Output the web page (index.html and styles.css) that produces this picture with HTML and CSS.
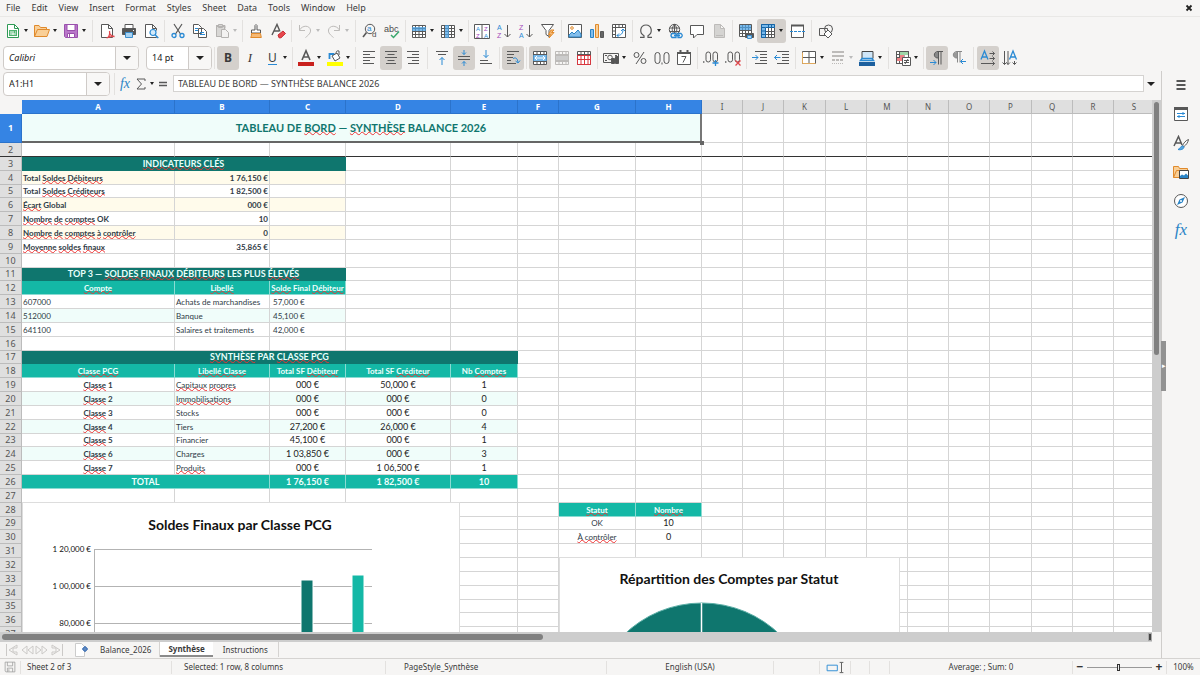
FILE: index.html
```html
<!DOCTYPE html>
<html lang="en">
<head>
<meta charset="utf-8">
<title>Synthèse</title>
<link rel="stylesheet" href="styles.css">
</head>
<body>
<div class="app">
  <header class="menubar">
    <nav class="menus" aria-label="Menu">
      <button>File</button><button>Edit</button><button>View</button><button>Insert</button><button>Format</button><button>Styles</button><button>Sheet</button><button>Data</button><button>Tools</button><button>Window</button><button>Help</button>
    </nav>
    <button class="close" aria-label="Close document"><svg viewBox="0 0 8 8"><path d="M1.500 1.500l5 5M6.500 1.500l-5 5" stroke-width="1.800"/></svg></button>
  </header>

  <div class="toolbar" role="toolbar" aria-label="Standard">
    <button class="tool drop" aria-label="New"><svg viewBox="0 0 16 16"><path class="green fw" d="M2.500 1.500h7l4 4v9h-11z"/><path class="green" d="M9.500 1.500v4h4"/><path class="fgreen" d="M4 7h8v6H4z"/><path stroke="#fff" d="M5 9h4M5 11h4M10 9h1M7 11h4"/></svg><i class="caret"></i></button>
    <button class="tool drop" aria-label="Open"><svg viewBox="0 0 16 16"><path fill="#f9cf97" stroke="#e08a2c" d="M.5 13.500v-11h4.500l1.500 2h6v2.500M.5 13.500l3-7h12l-2.500 7z"/></svg><i class="caret"></i></button>
    <button class="tool drop" aria-label="Save"><svg viewBox="0 0 16 16"><path fill="#b977c9" stroke="#9a50ad" d="M1.500 1.500h13v13h-12l-1-1z"/><path fill="#fff" stroke="#9a50ad" d="M4 1.500h8v6H4zM4.500 10.500h7v4h-7z"/><path stroke="#9a50ad" d="M6.500 11v3"/></svg><i class="caret"></i></button>
    <span class="sep wide"></span>
    <button class="tool" aria-label="Export as PDF"><svg viewBox="0 0 16 16"><path class="fw" d="M2.500 1.500h7l4 4v9h-11z"/><path d="M9.500 1.500v4h4"/><path stroke="#e0474c" stroke-width="1.300" d="M8.500 15c2-2 2.500-4.500 2-7M10.700 10.500c1 2 2.500 3 4.800 3-3-.5-5 0-8 1.500"/></svg></button>
    <button class="tool" aria-label="Print"><svg viewBox="0 0 16 16"><path class="fw" d="M4 5V1.500h8V5"/><path fill="#555" d="M1.500 5.500h13v6h-13z"/><path fill="#a9d3f2" stroke="#3d8fce" d="M4.500 9.500h7v5h-7z"/><path stroke="#fff" d="M12 7.500h1"/></svg></button>
    <button class="tool" aria-label="Print preview"><svg viewBox="0 0 16 16"><path class="fw" d="M13.500 13v1.500h-11v-13h7l4 4v2M9.500 1.500v4h4"/><circle cx="10" cy="9.500" r="3" fill="#d4eafa" class="blue" stroke-width="1.200"/><path class="blue" stroke-width="1.500" d="M12.300 12l3 3"/></svg></button>
    <span class="sep"></span>
    <button class="tool" aria-label="Cut"><svg viewBox="0 0 16 16"><path stroke-width="1.200" d="M4 1l6.500 10M12 1L5.500 11"/><circle cx="4" cy="12.500" r="2" class="blue" stroke-width="1.300"/><circle cx="12" cy="12.500" r="2" class="blue" stroke-width="1.300"/></svg></button>
    <button class="tool" aria-label="Copy"><svg viewBox="0 0 16 16"><path class="fw" d="M1.500 1.500h5l3 3v6h-8zM6.500 5.500h5l3 3v6h-8z"/><path class="blue" d="M3 5.500h3M3 7.500h3M8 9.500h4M8 11.500h5"/></svg></button>
    <button class="tool drop muted" aria-label="Paste"><svg viewBox="0 0 16 16"><path fill="#c9c8c6" stroke="#b5b3b1" d="M2 2.500h9v3M2.500 2.500v11H7"/><path fill="#d8d7d5" stroke="#b5b3b1" d="M2.500 3.500h8v10h-8zM4.500 1.500h4v3h-4z"/><path fill="#f3f2f1" stroke="#b5b3b1" d="M7.500 6.500h4l3 3v5h-7z"/></svg><i class="caret"></i></button>
    <span class="sep"></span>
    <button class="tool" aria-label="Clone formatting"><svg viewBox="0 0 16 16"><path class="fw" d="M7 7V2.500q1-2 2 0V7h3.500v3h-9V7z"/><path fill="#f6b974" stroke="#e08a2c" d="M3.500 10.500h9l.8 4H2.700q1-1.500.8-4z"/></svg></button>
    <button class="tool" aria-label="Clear formatting"><svg viewBox="0 0 16 16"><path stroke-width="1.400" d="M2 12L7 1.500l3 7M4 8h5"/><path fill="#e8474d" stroke="#c62f36" d="M8 12l5-4 2.500 2.500-4.500 4.300H9z"/></svg></button>
    <span class="sep"></span>
    <button class="tool drop muted" aria-label="Undo"><svg viewBox="0 0 16 16"><path d="M2.500 2v5.500h5.500M2.500 7c3-5 10-5 11 0 .4 3-2 5-5 7.500"/></svg><i class="caret"></i></button>
    <button class="tool drop muted" aria-label="Redo"><svg viewBox="0 0 16 16"><path d="M13.500 2v5.500H8M13.500 7c-3-5-10-5-11 0-.4 3 2 5 5 7.500"/></svg><i class="caret"></i></button>
    <span class="sep wide"></span>
    <button class="tool" aria-label="Find and replace"><svg viewBox="0 0 16 16"><circle cx="8" cy="6" r="4.700"/><path stroke-width="1.600" d="M4.500 9.500L1 14"/><text class="ic blue-t" x="5" y="8" font-size="8">a</text><text class="ic" x="10" y="14" font-size="8">d</text></svg></button>
    <button class="tool" aria-label="Spelling"><svg viewBox="0 0 16 16"><text class="ic" x="0" y="9" font-size="9">abc</text><path stroke="#3aa76d" stroke-width="1.500" d="M7 12l2.500 2.500L15 8.500"/></svg></button>
    <span class="sep"></span>
    <button class="tool drop" aria-label="Row"><svg viewBox="0 0 16 16"><path class="fw" d="M1.500 2.500h13v12h-13z"/><path d="M1.500 5.500h13M1.500 8.500h13M1.500 11.500h13M4.500 2.500v12M8 2.500v12M11.500 2.500v12"/><path class="fblue" d="M1 4h14v4H1z"/></svg><i class="caret"></i></button>
    <button class="tool drop" aria-label="Column"><svg viewBox="0 0 16 16"><path class="fw" d="M1.500 2.500h13v12h-13z"/><path d="M1.500 5.500h13M1.500 8.500h13M1.500 11.500h13M4.500 2.500v12M8.500 2.500v12M11.500 2.500v12"/><path class="fblue" d="M5 2h4v13H5z"/></svg><i class="caret"></i></button>
    <span class="sep"></span>
    <button class="tool" aria-label="Sort"><svg viewBox="0 0 16 16"><path class="fw" d="M.5 1.500h15v14H.5zM8 2v13"/><path d="M1 1.500h14"/><text class="ic blue-t" x="2" y="8" font-size="6">A</text><text class="ic purple-t" x="2" y="15" font-size="6">Z</text><text class="ic purple-t" x="10" y="8" font-size="6">Z</text><text class="ic blue-t" x="10" y="15" font-size="6">A</text></svg></button>
    <button class="tool" aria-label="Sort ascending"><svg viewBox="0 0 16 16"><text class="ic blue-t" x="1" y="7" font-size="7">A</text><text class="ic purple-t" x="1" y="15" font-size="7">Z</text><path d="M11.500 2v12M8.500 11l3 3 3-3"/></svg></button>
    <button class="tool" aria-label="Sort descending"><svg viewBox="0 0 16 16"><text class="ic purple-t" x="1" y="7" font-size="7">Z</text><text class="ic blue-t" x="1" y="15" font-size="7">A</text><path d="M11.500 2v12M8.500 11l3 3 3-3"/></svg></button>
    <button class="tool" aria-label="AutoFilter"><svg viewBox="0 0 16 16"><path class="fw" d="M1.500 1.500h12l-4.500 6v6l-3-2v-4z"/><path fill="#f6b974" stroke="#e08a2c" d="M11 7l-2.500 4.500h2L9 15l5-5.500h-2.500L14 7z"/></svg></button>
    <span class="sep"></span>
    <button class="tool" aria-label="Insert image"><svg viewBox="0 0 16 16"><path class="fw" d="M1.500 1.500h13v13h-13z"/><path fill="#83beec" stroke="#2a84c6" d="M2 14v-2l3-3 2 2 4-4 3 4v3z"/><circle cx="5" cy="5" r="1.300" stroke="#e08a2c"/></svg></button>
    <button class="tool" aria-label="Insert chart"><svg viewBox="0 0 16 16"><path fill="#83beec" stroke="#2a84c6" d="M1.500 6.500h3v8h-3z"/><path fill="#f9cf97" stroke="#e08a2c" d="M6.500 1.500h3v13h-3z"/><path fill="#666" d="M11.500 8.500h3v6h-3z"/></svg></button>
    <button class="tool" aria-label="Insert pivot table"><svg viewBox="0 0 16 16"><path class="fw" d="M1.500 1.500h13v13h-13z"/><path d="M1.500 4.500h13M4.500 1.500v13M8 2v2M11.500 2v2M2 8h2M2 11.500h2"/><path class="blue" d="M6 12.500c4 0 6-2 6-6M10 8l2-2 2 2M8 10.500l-2 2 2 2"/></svg></button>
    <span class="sep"></span>
    <button class="tool drop" aria-label="Special character"><svg viewBox="0 0 16 16"><path stroke-width="1.200" d="M2 14.300h4v-1.500C.5 9.500 2.500 2 8 2s7.500 7.500 2 10.800v1.500h4"/></svg><i class="caret"></i></button>
    <button class="tool" aria-label="Insert hyperlink"><svg viewBox="0 0 16 16"><circle cx="7.500" cy="6.500" r="5.200"/><path d="M7.500 1.500c-3 3-3 7 0 10M7.500 1.500c3 3 3 7 0 10M2.500 5h10M2.500 8.500h10M7.500 1v10"/><path class="blue" fill="#f6f5f4" stroke-width="1.300" d="M5 10.500h4v4H5q-2-2 0-4zM11 10.500h3q2.500 2 0 4h-3zM7 12.500h6"/></svg></button>
    <button class="tool" aria-label="Insert comment"><svg viewBox="0 0 16 16"><path class="fw" d="M1.500 2.500h13v9H8l-3.500 3.500v-3.500h-3z"/></svg></button>
    <button class="tool muted" aria-label="Headers and footers"><svg viewBox="0 0 16 16"><path fill="#d5d4d2" d="M3.500 1.500h6l4 4v9h-10zM9.500 1.500v4h4M5 12.500h7"/></svg></button>
    <span class="sep"></span>
    <button class="tool" aria-label="Define print area"><svg viewBox="0 0 16 16"><path class="fw" d="M1.500 1.500h12v12h-12z"/><path d="M1.500 4.500h12M1.500 7.500h12M1.500 10.500h12M4.500 1.500v12M7.500 1.500v12M10.500 1.500v12"/><path class="fblue" d="M2 2h11v5H2z"/><path fill="#555" d="M7.500 10.500h8v4h-8z"/><path fill="#a9d3f2" stroke="#3d8fce" d="M9.500 12.500h4v3h-4z"/></svg></button>
    <button class="tool drop on" aria-label="Freeze rows and columns" aria-pressed="true"><svg viewBox="0 0 16 16"><path class="fw" d="M1.500 1.500h13v13h-13z"/><path class="fblue" d="M1 1h14v4H5v10H1z"/><path d="M5 8.500h9M5 11.500h9M8.500 5v9M11.500 5v9"/><path stroke="#1765a5" d="M1.500 1.500h13v3h-9v10h-4zM2 4.500h3M2 8h3M2 11.500h3M8.500 2v3M11.500 2v3"/></svg><i class="caret"></i></button>
    <button class="tool" aria-label="Split window"><svg viewBox="0 0 16 16"><path class="fw" d="M2.500 2.500h12v12h-12z"/><path stroke-width="2" d="M2 2.500h13"/><path class="blue" stroke-dasharray="3 1" d="M1 8.500h15"/></svg></button>
    <span class="sep wide"></span>
    <button class="tool" aria-label="Show draw functions"><svg viewBox="0 0 16 16"><path d="M1.500 5.500h8v7h-8z"/><circle cx="10.500" cy="6" r="4"/><path class="fw" d="M10 7l4 4-4 4-4-4z"/></svg></button>
  </div>

  <div class="toolbar formatting" role="toolbar" aria-label="Formatting">
    <div class="combo font-name"><input aria-label="Font name" value="Calibri"><button aria-label="Choose font"><i class="caret big"></i></button></div>
    <div class="combo font-size"><input aria-label="Font size" value="14 pt"><button aria-label="Choose size"><i class="caret big"></i></button></div>
    <span class="sep"></span>
    <button class="tool on glyph bold" aria-pressed="true" aria-label="Bold">B</button>
    <button class="tool glyph italic" aria-label="Italic">I</button>
    <button class="tool drop glyph" aria-label="Underline"><span class="under">U</span><i class="caret"></i></button>
    <span class="sep"></span>
    <button class="tool drop" aria-label="Font color"><svg viewBox="0 0 16 16"><path stroke-width="1.600" d="M4 10L8 .7 12 10M5.300 7h5.400"/><path fill="#c9211e" stroke="none" d="M0 12h16v4H0z"/></svg><i class="caret"></i></button>
    <button class="tool drop" aria-label="Highlighting"><svg viewBox="0 0 16 16"><path class="blue" stroke-width="1.800" d="M2.500 9V4h5"/><path class="fw" d="M5 6l5-3 3 5-5 3zM9 4q0-4 3-3v4"/><path fill="#ff0" stroke="none" d="M0 12h16v4H0z"/></svg><i class="caret"></i></button>
    <span class="sep"></span>
    <button class="tool" aria-label="Align left"><svg viewBox="0 0 16 16"><path d="M2 1.500h12M2 4.500h7M2 7.500h12M2 10.500h7M2 13.500h11"/></svg></button>
    <button class="tool on" aria-pressed="true" aria-label="Center horizontally"><svg viewBox="0 0 16 16"><path d="M2 1.500h12M4.500 4.500h7M2 7.500h12M4.500 10.500h7M3 13.500h10"/></svg></button>
    <button class="tool" aria-label="Align right"><svg viewBox="0 0 16 16"><path d="M2 1.500h12M7 4.500h7M2 7.500h12M7 10.500h7M3 13.500h11"/></svg></button>
    <span class="sep wide"></span>
    <button class="tool" aria-label="Align top"><svg viewBox="0 0 16 16"><path d="M2 1.500h12M4 4.500h8"/><path class="blue" d="M8 15V7.500M5.500 10L8 7.500l2.500 2.500"/></svg></button>
    <button class="tool on" aria-pressed="true" aria-label="Center vertically"><svg viewBox="0 0 16 16"><path d="M2 6.500h12M2 9.500h12"/><path class="blue" d="M8 0v4.500M6 2.500l2 2 2-2M8 16v-4.500M6 13.500l2-2 2 2"/></svg></button>
    <button class="tool" aria-label="Align bottom"><svg viewBox="0 0 16 16"><path d="M2 10.500h8M2 13.500h12"/><path class="blue" d="M8 0v7.500M5.500 5L8 7.500 10.500 5"/></svg></button>
    <span class="sep"></span>
    <button class="tool on" aria-pressed="true" aria-label="Wrap text"><svg viewBox="0 0 16 16"><path d="M2 1.500h12M2 4.500h7M2 7.500h6M2 10.500h4M2 13.500h9"/><path class="blue" d="M8 8.500c3-1.500 4.500 0 5 4M10.500 11l2.500 2 2-2.500"/></svg></button>
    <span class="sep"></span>
    <button class="tool on" aria-pressed="true" aria-label="Merge and center cells"><svg viewBox="0 0 16 16"><path class="fw" d="M1.500 1.500h13v13h-13z"/><path d="M1.500 4.500h13M1.500 11.500h13M5 1.500v3M8.500 1.500v3M12 1.500v3M5 11.500v3M8.500 11.500v3M12 11.500v3"/><path class="fblue" d="M1 5h14v6H1z"/><path stroke="#fff" d="M3 8h10M5 6L3 8l2 2M11 6l2 2-2 2"/></svg></button>
    <button class="tool muted" aria-label="Merge cells"><svg viewBox="0 0 16 16"><path d="M1.500 1.500h13v13h-13zM1.500 4.500h13M1.500 11.500h13M5 1.500v3M8.500 1.500v3M12 1.500v3M5 11.500v3M8.500 11.500v3M12 11.500v3"/><path fill="#ccc" d="M1.500 5.500h13v5h-13z"/></svg></button>
    <button class="tool" aria-label="Unmerge cells"><svg viewBox="0 0 16 16"><path class="fw" d="M1.500 1.500h13v13h-13z"/><path d="M1.500 4.500h13M5 1.500v3M8.500 1.500v3M12 1.500v3"/><path stroke="#d9363e" d="M1.500 5.500h13v9h-13zM1.500 9.500h13M5 5.500v9M8.500 5.500v9M12 5.500v9"/></svg></button>
    <span class="sep"></span>
    <button class="tool drop" aria-label="Format as currency"><svg viewBox="0 0 16 16"><path d="M.5 3.500h15v9H.5z"/><path d="M2 5.500h2M12 5.500h2M2 10.500h2"/><circle cx="7" cy="7.500" r="2.300"/><path fill="#555" d="M8.500 8.500h3v5h-3zM12.500 6.500h3v7h-3z"/></svg><i class="caret"></i></button>
    <button class="tool" aria-label="Format as percent"><svg viewBox="0 0 16 16"><circle cx="4.500" cy="5" r="2.500"/><circle cx="11.500" cy="11" r="2.500"/><path d="M12 2L4 14"/></svg></button>
    <button class="tool" aria-label="Format as number"><svg viewBox="0 0 16 16"><rect x="1" y="2.500" width="5" height="11" rx="2.500"/><rect x="10" y="2.500" width="5" height="11" rx="2.500"/><path d="M8 12.500v2"/></svg></button>
    <button class="tool" aria-label="Format as date"><svg viewBox="0 0 16 16"><path class="fw" d="M1.500 2.500h13v12h-13z"/><path stroke-width="2" d="M1 3h14M4.500 0v3M11.500 0v3"/><path d="M5.500 6.500h4.500l-3 6"/></svg></button>
    <span class="sep"></span>
    <button class="tool" aria-label="Add decimal place"><svg viewBox="0 0 16 16"><rect x="3" y="2" width="4.500" height="10" rx="2.200"/><rect x="10" y="2" width="4.500" height="10" rx="2.200"/><path d="M.8 11v2"/><path class="blue" stroke-width="1.300" d="M12.500 10v6M9.500 13h6"/></svg></button>
    <button class="tool" aria-label="Delete decimal place"><svg viewBox="0 0 16 16"><rect x="3" y="2" width="4.500" height="10" rx="2.200"/><rect x="10" y="2" width="4.500" height="10" rx="2.200"/><path d="M.8 11v2"/><path stroke="#e0474c" stroke-width="1.300" d="M10.500 10.500l5 5M15.500 10.500l-5 5"/></svg></button>
    <span class="sep"></span>
    <button class="tool" aria-label="Increase indent"><svg viewBox="0 0 16 16"><path d="M3 1.500h12M8 4.500h7M8 7.500h7M8 10.500h7M3 13.500h12"/><path class="blue" d="M0 7.500h6M3.500 5L6 7.500 3.500 10"/></svg></button>
    <button class="tool" aria-label="Decrease indent"><svg viewBox="0 0 16 16"><path d="M3 1.500h12M8 4.500h7M8 7.500h7M8 10.500h7M3 13.500h12"/><path class="blue" d="M.5 7.500h6M3 5L.5 7.500 3 10"/></svg></button>
    <span class="sep"></span>
    <button class="tool drop" aria-label="Borders"><svg viewBox="0 0 16 16"><path class="fw" d="M1.500 1.500h13v12h-13zM8 1.500v12M1.500 7.500h13"/><path stroke="#e0a95c" d="M1.500 2.500v11h13"/></svg><i class="caret"></i></button>
    <button class="tool drop muted" aria-label="Border style"><svg viewBox="0 0 16 16"><path stroke-width="2" d="M2 2h12M2 6h12"/><path stroke-width="2" stroke-dasharray="3 1" d="M2 10h12"/><path stroke-dasharray="1 1" d="M2 13.500h12"/></svg><i class="caret"></i></button>
    <button class="tool drop" aria-label="Border color"><svg viewBox="0 0 16 16"><path fill="#cfe6f8" stroke="#444" d="M3 1.500h11v7H3z"/><path class="blue" stroke-width="1.500" d="M1.500 10.500h13l-1.500-2h-10z"/><path fill="#1c5f9e" stroke="none" d="M0 12h16v4H0z"/></svg><i class="caret"></i></button>
    <span class="sep wide"></span>
    <button class="tool drop" aria-label="Conditional formatting"><svg viewBox="0 0 16 16"><path class="fw" d="M1.500 1.500h12v12h-12z"/><path d="M1.500 1.500h12v12h-12zM1.500 4.500h12M1.500 7.500h12M1.500 10.500h6M4.500 1.500v12M9 1.500v6"/><path fill="#9fd6a8" stroke="none" d="M5 2h8v3H5z"/><path fill="#ef8085" stroke="none" d="M5 5h4v3H5zM2 8h5v3H2z"/><path class="fw" d="M7.500 7.500h8v8h-8zM9 10.500h5M9 12.500h5M13 9l-3 5"/></svg><i class="caret"></i></button>
    <span class="sep"></span>
    <button class="tool on" aria-pressed="true" aria-label="Left to right"><svg viewBox="0 0 16 16"><path fill="#888" stroke="none" d="M9 2v6C4 8 4 2 9 2z"/><path d="M14 1.500H8.500M9.500 1.500v13M12 1.500v13M9.500 8C4 8.500 4 1.500 9 1.500"/><path class="blue" d="M1 12.500h6M4.500 10L7 12.500 4.500 15"/></svg></button>
    <button class="tool" aria-label="Right to left"><svg viewBox="0 0 16 16"><path fill="#999" stroke="none" d="M6 2v6C1 8 1 2 6 2z"/><path stroke="#888" d="M11 1.500H5.500M6.500 1.500v11M9 1.500v11M6.500 8C1 8.500 1 1.500 6 1.500"/><path class="blue" d="M15 11.500h-5M12 9l-2.500 2.500L12 14"/></svg></button>
    <span class="sep wide"></span>
    <button class="tool on" aria-pressed="true" aria-label="Text direction from left to right"><svg viewBox="0 0 16 16"><path class="blue" stroke-width="1.300" d="M1 9.500L4.500 1 8 9.500M2.200 7h4.600"/><path d="M9.500 3.500h5M12.500 1.500l2 2-2 2M9.500 8.500h5M12.500 6.500l2 2-2 2M1 13.500h13.500M12.500 11.500l2 2-2 2"/></svg></button>
    <button class="tool" aria-label="Text direction from top to bottom"><svg viewBox="0 0 16 16"><path class="blue" stroke-width="1.300" d="M7.500 9.500L11 1l3.500 8.500M8.700 7h4.600"/><path d="M2.500 1v13.500M.5 12.500l2 2 2-2M6 1v13.500M4.500 12.500l1.500 2 2-2M12.500 11v3.500M10.500 12.500l2 2 2-2"/></svg></button>
  </div>

  <div class="body">
    <main class="main">
      <div class="formula-bar">
        <div class="combo name-box"><input aria-label="Name box" value="A1:H1"><button aria-label="Choose range"><i class="caret big"></i></button></div>
        <span class="sep"></span>
        <button class="mini fx" aria-label="Function wizard">fx</button>
        <button class="mini sum" aria-label="Select function"><svg viewBox="0 0 12 12"><path d="M10 3V1H2l4.500 5L2 11h8V9"/></svg><i class="caret"></i></button>
        <button class="mini" aria-label="Formula"><svg viewBox="0 0 12 12"><path d="M2 4.500h8M2 7.500h8" stroke-width="1.500"/></svg></button>
        <input class="formula" aria-label="Input line" value="TABLEAU DE BORD — SYNTHÈSE BALANCE 2026">
        <button class="mini" aria-label="Expand formula bar"><i class="caret big"></i></button>
      </div>

      <div class="sheet-row">
        <div class="viewport">
          <div class="canvas">
            <table class="grid" id="grid"></table>
            <i class="fill-handle"></i>
            <svg class="chart bars" viewBox="0 0 438 240" role="img" aria-label="Soldes Finaux par Classe PCG">
              <rect class="frame" x=".5" y=".5" width="437" height="260"/>
              <text class="chart-title" x="218" y="28">Soldes Finaux par Classe PCG</text>
              <path class="axis" d="M72 47.500h278M72 84.500h278M72 121.500h278M72.500 47v200"/>
              <text class="tick" x="69" y="50">1 20,000 €</text>
              <text class="tick" x="69" y="87">1 00,000 €</text>
              <text class="tick" x="69" y="124">80,000 €</text>
              <rect class="bar-a" x="279" y="78" width="12" height="170"/>
              <rect class="bar-b" x="330" y="73" width="12" height="175"/>
            </svg>
            <svg class="chart pie" viewBox="0 0 342 240" role="img" aria-label="Répartition des Comptes par Statut">
              <rect class="frame" x=".5" y=".5" width="340" height="260"/>
              <text class="chart-title" x="170" y="27">Répartition des Comptes par Statut</text>
              <circle class="slice" cx="143" cy="158" r="112"/>
              <path stroke="#fff" stroke-width="1.500" d="M142.500 46v112"/>
            </svg>
          </div>
        </div>
        <div class="vscroll"><i class="thumb"></i></div>
      </div>
      <div class="hscroll"><i class="thumb"></i><i class="grip"></i></div>

      <div class="tabs">
        <span class="tab-nav">
          <button aria-label="First sheet"><svg viewBox="0 0 14 12"><path d="M1.500 0v12M12 1L4 6l8 5V8H8V4h4z"/></svg></button>
          <button aria-label="Previous sheet"><svg viewBox="0 0 14 12"><path d="M7 2L2 6l5 4zM13 2L8 6l5 4z"/></svg></button>
          <button aria-label="Next sheet"><svg viewBox="0 0 14 12"><path d="M1 2l5 4-5 4zM7 2l5 4-5 4z"/></svg></button>
          <button aria-label="Last sheet"><svg viewBox="0 0 14 12"><path d="M12.500 0v12M2 1l8 5-8 5V8h4V4H2z"/></svg></button>
        </span>
        <button class="add-sheet" aria-label="Add sheet"><svg viewBox="0 0 16 14"><path fill="#fff" stroke="#ccc" d="M1.500.5h6l3 3v10h-9z"/><circle cx="11" cy="6" r="2" fill="#fff" stroke="#2b62ad"/><path stroke="#2b62ad" d="M11 3v6M8 6h6"/></svg></button>
        <button class="tab">Balance_2026</button><button class="tab active">Synthèse</button><button class="tab last">Instructions</button>
      </div>
    </main>

    <aside class="sidebar">
      <button aria-label="Sidebar settings"><svg viewBox="0 0 16 16"><path stroke="#222" stroke-width="1.500" d="M3.500 4h9M3.500 8h9M3.500 12h9"/></svg></button>
      <button aria-label="Properties"><svg viewBox="0 0 16 16"><path class="fw" d="M1.500 2.500h13v12h-13z"/><path stroke-width="3" d="M1 2.500h14"/><path class="blue" d="M4 7.500h8M10 6v3M4 10.500h8M6 9v3"/></svg></button>
      <button aria-label="Styles"><svg viewBox="0 0 16 16"><path stroke-width="1.500" d="M1 11L5.500 1.500 9 10M2.700 8h5.500"/><path class="fw" d="M15.500 4.500c-3 1-5 4-6 6l1.500 1c2-1.500 4-4 4.500-7z"/><path fill="#5aa6de" class="blue" d="M9.500 11c-2 0-2 2.500-4.500 3.500 3 .8 6-.5 6-2.500z"/></svg></button>
      <button aria-label="Gallery"><svg viewBox="0 0 16 16"><path fill="#f9cf97" stroke="#e08a2c" d="M.5 13.500v-11h5l1 2h8v2M.5 13.500l3-7h12v7z"/><path fill="#fff" stroke="#444" d="M6.500 6.500h9v8h-9z"/><path fill="#2a84c6" stroke="none" d="M7 14v-2l2-1.500 2 1 2-2 2 2V14z"/></svg></button>
      <button aria-label="Navigator"><svg viewBox="0 0 16 16"><circle cx="8" cy="8" r="6.500" class="fw"/><path fill="#2a84c6" stroke="none" d="M12 4L9.500 9.500 4 12l2.500-5.500z"/><circle cx="8" cy="8" r="1" fill="#fff" stroke="none"/></svg></button>
      <button class="fx" aria-label="Functions">fx</button>
      <button class="side-handle" aria-label="Hide sidebar">▸</button>
    </aside>
  </div>

  <footer class="status">
    <span class="cell pic"><svg viewBox="0 0 16 16"><path stroke="#999" d="M1.500 1.500h13v13h-12l-1-1zM4.500 1.500v5h7v-5M4.500 14.500v-5h7v5M6.500 11v3"/></svg></span>
    <span class="cell lead">Sheet 2 of 3</span>
    <span class="cell pad">Selected: 1 row, 8 columns</span>
    <span class="cell pad-lg">PageStyle_Synthèse</span>
    <span class="cell mid">English (USA)</span>
    <span class="cell"></span>
    <span class="cell pic"><svg class="wide-pic" viewBox="0 0 20 14"><path class="blue" d="M1.500 4.500h11v6h-11z"/><path d="M15 1.500h4M17 2v10M15 12.500h4"/></svg></span>
    <span class="cell"></span>
    <span class="cell"></span>
    <span class="cell mid">Average: ; Sum: 0</span>
    <span class="cell zoom"><button aria-label="Zoom out">−</button><input type="range" min="0" max="100" value="49" aria-label="Zoom"><button aria-label="Zoom in">+</button></span>
    <span class="cell mid plain">100%</span>
  </footer>
</div>
<script src="script.js"></script>
</body>
</html>
```
FILE: styles.css
```css
* { box-sizing: border-box; }
body {
  margin: 0;
  background: #f6f5f4;
  color: #3a3a3a;
  font-family: "Noto Sans", "Open Sans", sans-serif;
  font-size: 9px;
  line-height: 12px;
}
button, input { font: inherit; color: inherit; }
button { border: 0; padding: 0; background: none; }
input { min-width: 0; outline: 0; }
svg { display: block; fill: none; stroke: #585858; stroke-width: 1; }

.app { display: flex; flex-direction: column; height: 100vh; overflow: hidden; }

.blue { stroke: #2a8ad4; }
.green { stroke: #2e9a55; }
.fgreen { fill: #4fb36f; stroke: none; }
.fblue { fill: #4da3e4; fill-opacity: .75; stroke: none; }
.fw { fill: #fff; }
.ic { fill: #4d4d4d; stroke: none; font-family: "Liberation Sans", sans-serif; }
.blue-t { fill: #2a8ad4; }
.purple-t { fill: #a347ba; }

.menubar { display: flex; height: 17px; flex: none; justify-content: space-between; align-items: center; border-bottom: 1px solid #e9e8e6; }
.menus { display: flex; gap: 11px; padding-left: 6px; }
.close { width: 22px; display: grid; place-items: center; }
.close svg { width: 8px; height: 8px; stroke: #222; }

.toolbar { display: flex; align-items: center; flex: none; height: 27px; padding-left: 2px; }
.formatting { padding-left: 3px; }
.tool { flex: none; width: 22px; height: 24px; display: flex; align-items: center; padding-left: 3px; border-radius: 3px; }
.tool svg { width: 16px; height: 16px; flex: none; overflow: visible; }
.drop { width: 29px; gap: 3px; }
.on { background: #d4d0cc; }
.muted svg { stroke: #bdbbb9; }
.muted .caret { border-top-color: #bbb; }
.caret { flex: none; border: 2px solid transparent; border-top: 3px solid #222; border-bottom: 0; }
.caret.big { border-width: 4px 4px 0; }
.sep { flex: none; width: 5px; height: 22px; background: linear-gradient(#e3e1df, #e3e1df) center / 1px 100% no-repeat; }
.sep.wide { width: 7px; }
.glyph { font-size: 12px; padding-left: 0; justify-content: center; }
.glyph.drop { justify-content: flex-start; padding-left: 7px; gap: 6px; }
.bold { font-weight: 700; }
.italic { font-family: "Liberation Serif", serif; font-style: italic; font-size: 13px; }
.under { border-bottom: 1px solid #2a8ad4; line-height: 13px; }

.combo { flex: none; display: flex; height: 24px; border: 1px solid #cfcbc8; border-radius: 4px; background: #fff; overflow: hidden; }
.combo input { flex: 1; border: 0; padding: 0 0 0 5px; background: none; color: #222; }
.combo button { width: 23px; display: grid; place-items: center; background: #f8f7f6; border-left: 1px solid #cfcbc8; }
.font-name { width: 136px; margin-right: 7px; }
.font-name input { font-style: italic; }
.font-size { width: 66px; }
.name-box { width: 107px; }

.body { flex: 1; display: flex; min-height: 0; }
.main { flex: 1; min-width: 0; display: flex; flex-direction: column; border-right: 1px solid #cfcdcb; }
.formula-bar { display: flex; flex: none; align-items: center; height: 29px; padding: 0 3px 4px; }
.mini { flex: none; display: flex; align-items: center; justify-content: center; width: 14px; }
.mini svg { width: 12px; height: 12px; }
.sum { width: 24px; gap: 3px; }
.fx { font-family: "Liberation Serif", serif; font-style: italic; font-size: 14px; color: #2a84c6; }
.formula-bar .sep { width: 8px; }
.formula { flex: 1; height: 17px; margin: 0 0 0 3px; border: 1px solid #d5d3d1; padding: 0 4px; background: #fff; }

.sheet-row { flex: 1; display: flex; min-height: 0; }
.viewport { flex: 1; min-width: 0; overflow: hidden; background: #fff; }
.canvas { position: relative; }
.grid { table-layout: fixed; border-collapse: separate; border-spacing: 0; width: 1155px; font-family: Lato, Carlito, sans-serif; font-size: 8px; line-height: 12px; color: #2f3b46; }
.grid tr { height: 14px; }
.grid tr.short { height: 13px; }
.grid tr.title-row { height: 29px; }
.grid td, .grid th { padding: 0 1px; overflow: hidden; white-space: nowrap; border-right: 1px solid #d5d5d5; border-bottom: 1px solid #d5d5d5; text-align: left; }
.grid th { font-family: "Noto Sans", sans-serif; font-weight: 400; color: #555; background: #dfdfdf; border-color: #bcbcbc; text-align: center; padding: 0; }
.grid thead th { font-size: 8px; }
.grid tbody th { font-size: 9px; }
.grid th.sel { background: #3584e4; border-color: #2b73cb; color: #fff; font-weight: 700; }
.grid th.corner { background: #f6f5f4; border-color: #f6f5f4; }
.grid tr.freeze > * { border-bottom-color: #333; }

.grid td.title { font-size: 11px; font-weight: 700; color: #0f766e; background: #f0fdfa; text-align: center; border-right: 2px solid #777; border-bottom: 2px solid #666; }
.grid td.band { background: #0f766e; color: #e8fffb; font-weight: 700; font-size: 9px; text-align: center; border-color: #0f766e; }
.grid td.head { background: #14b8a6; color: #f0fffd; font-weight: 700; text-align: center; border-color: #8adbd2; }
.grid td.total { background: #14b8a6; color: #f0fffd; font-weight: 700; font-size: 9px; text-align: center; border-color: #8adbd2; }
.grid td.cream { background: #fffbeb; }
.grid td.mint { background: #f0fdfa; }
.grid td.b { font-weight: 700; }
.grid td.c { text-align: center; }
.grid td.r { text-align: right; }
.grid td.ind { padding-left: 3px; }
.grid td.num { font-size: 9px; color: #222; text-align: center; }
.miss { text-decoration: underline wavy #e33 1px; text-underline-offset: -1px; text-decoration-skip-ink: none; }

.fill-handle { position: absolute; left: 700px; top: 41px; width: 4px; height: 4px; background: #666; }
.chart { position: absolute; top: 402px; }
.bars { left: 22px; width: 438px; height: 240px; }
.pie { left: 559px; top: 457px; width: 342px; height: 240px; }
.frame { fill: #fff; stroke: #ddd; }
.chart text { stroke: none; fill: #111; font-family: Lato, Carlito, sans-serif; }
.chart .chart-title { font-size: 14px; font-weight: 700; text-anchor: middle; }
.chart .tick { font-size: 8px; text-anchor: end; }
.axis { stroke: #b3b3b3; }
.bar-a { fill: #0f766e; stroke: #fff; }
.bar-b { fill: #14b8a6; stroke: #fff; }
.slice { fill: #0f766e; stroke: #5fb0a8; }

.vscroll { flex: none; width: 9px; background: #cdcdcd; padding: 2px; }
.vscroll .thumb { display: block; height: 48%; border-radius: 3px; background: #808080; }
.hscroll { flex: none; display: flex; justify-content: space-between; align-items: center; height: 10px; margin-right: 9px; padding-left: 2px; background: #cdcdcd; }
.hscroll .thumb { width: 47%; height: 6px; border-radius: 3px; background: #808080; }
.hscroll .grip { width: 4px; height: 8px; background: #444; border: 1px solid #aaa; }

.tabs { flex: none; display: flex; height: 16px; font-size: 8px; }
.tab-nav { display: flex; align-items: center; padding-left: 5px; }
.tab-nav button { width: 15px; }
.tab-nav svg { width: 14px; height: 12px; stroke: #cbc9c7; }
.add-sheet { width: 20px; margin-left: 7px; display: grid; place-items: center; }
.add-sheet svg { width: 16px; height: 14px; }
.tab { padding: 0 8px; height: 15px; line-height: 13px; border-right: 1px solid #d5d3d1; }
.tab.active { background: #fff; border-right: 0; border-bottom: 2px solid #8b8b8b; font-weight: 700; }
.tab.last { padding: 0 10px; }

.sidebar { position: relative; flex: none; width: 38px; display: flex; flex-direction: column; align-items: center; gap: 5px; padding-top: 2px; }
.sidebar button { width: 24px; height: 24px; display: grid; place-items: center; }
.sidebar svg { width: 16px; height: 16px; }
.sidebar .fx { font-size: 17px; }
.sidebar .side-handle { position: absolute; left: -1px; top: 46%; width: 5px; height: 50px; background: #929292; color: #fff; font-size: 7px; }

.status { flex: none; display: grid; grid-template-columns: 21px 151fr 214fr 221fr 167fr 46px 31px 19px 20px 183fr 94px 33px; height: 17px; align-items: center; border-top: 1px solid #d5d3d1; font-size: 8px; }
.cell { height: 13px; border-right: 1px solid #e3e1df; white-space: nowrap; overflow: hidden; }
.lead { padding-left: 6px; }
.pad { padding-left: 12px; }
.pad-lg { padding-left: 18px; }
.mid { text-align: center; }
.plain { border-right: 0; }
.pic { display: grid; place-items: center; }
.pic svg { width: 12px; height: 12px; }
.pic svg.wide-pic { width: 20px; height: 13px; }
.zoom { display: flex; align-items: center; justify-content: center; gap: 3px; }
.zoom button { width: 8px; font-size: 12px; font-weight: 700; line-height: 12px; color: #333; }
.zoom input { appearance: none; width: 65px; height: 12px; margin: 0; background: linear-gradient(#999, #999) center / 100% 1px no-repeat; }
.zoom input::-webkit-slider-thumb { appearance: none; width: 3px; height: 7px; background: #eee; border: 1px solid #333; }
```
FILE: script.js
```js
const columns = [
  ["A", 153], ["B", 95], ["C", 76], ["D", 105], ["E", 67], ["F", 41], ["G", 77], ["H", 66],
  ["I", 41], ["J", 41], ["K", 42], ["L", 41], ["M", 41], ["N", 41], ["O", 41], ["P", 42],
  ["Q", 41], ["R", 41], ["S", 41],
];
const lastRow = 38;

// Cell format: [column, text, classes, span]. Words in braces are flagged by the spell checker.
const rows = {
  1: [["A", "TABLEAU DE {BORD} — {SYNTHÈSE} BALANCE 2026", "title", 8]],
  3: [["A", "{INDICATEURS CLÉS}", "band", 3]],
  11: [["A", "TOP 3 — {SOLDES FINAUX} {DÉBITEURS} LES PLUS {ÉLEVÉS}", "band", 3]],
  12: [["A", "{Compte}", "head"], ["B", "{Libellé}", "head"], ["C", "{Solde} Final {Débiteur}", "head"]],
  17: [["A", "{SYNTHÈSE} PAR {CLASSE PCG}", "band", 5]],
  18: [["A", "{Classe PCG}", "head"], ["B", "{Libellé Classe}", "head"], ["C", "Total SF {Débiteur}", "head"], ["D", "Total SF {Créditeur}", "head"], ["E", "Nb {Comptes}", "head"]],
  26: [["A", "TOTAL", "total", 2], ["C", "1 76,150 €", "total"], ["D", "1 82,500 €", "total"], ["E", "10", "total"]],
  28: [["G", "{Statut}", "head"], ["H", "{Nombre}", "head"]],
  29: [["G", "OK", "c"], ["H", "10", "num"]],
  30: [["G", "{À contrôler}", "c"], ["H", "0", "num"]],
};

[
  ["Total {Soldes Débiteurs}", "1 76,150 €"],
  ["Total {Soldes Créditeurs}", "1 82,500 €"],
  ["{Écart} Global", "000 €"],
  ["{Nombre} {de} {comptes} OK", "10"],
  ["{Nombre} {de} {comptes} {à} {contrôler}", "0"],
  ["{Moyenne} {soldes} {finaux}", "35,865 €"],
].forEach(([label, value], i) => {
  const tint = i % 2 ? "" : " cream";
  rows[4 + i] = [["A", label, "b" + tint], ["B", value, "b r" + tint], ["C", "", tint]];
});

[
  ["607000", "Achats de marchandises", "57,000 €"],
  ["512000", "Banque", "45,100 €"],
  ["641100", "Salaires et traitements", "42,000 €"],
].forEach(([account, label, value], i) => {
  const tint = i % 2 ? " mint" : "";
  rows[13 + i] = [["A", account, tint], ["B", label, tint], ["C", value, "ind" + tint]];
});

[
  ["{Capitaux} {propres}", "000 €", "50,000 €", "1"],
  ["{Immobilisations}", "000 €", "000 €", "0"],
  ["Stocks", "000 €", "000 €", "0"],
  ["Tiers", "27,200 €", "26,000 €", "4"],
  ["Financier", "45,100 €", "000 €", "1"],
  ["Charges", "1 03,850 €", "000 €", "3"],
  ["{Produits}", "000 €", "1 06,500 €", "1"],
].forEach(([label, debit, credit, count], i) => {
  const tint = i % 2 ? " mint" : "";
  rows[19 + i] = [
    ["A", `{Classe} ${i + 1}`, "b c" + tint], ["B", label, tint],
    ["C", debit, "num" + tint], ["D", credit, "num" + tint], ["E", count, "num" + tint],
  ];
});

const markup = (text) => text.replace(/\{([^}]*)\}/g, '<span class="miss">$1</span>');

let html = '<colgroup><col style="width:22px">';
html += columns.map(([, w]) => `<col style="width:${w}px">`).join("");
html += '</colgroup><thead><tr><th class="corner"></th>';
html += columns.map(([name], i) => `<th scope="col" class="${i < 8 ? "sel" : ""}">${name}</th>`).join("");
html += "</tr></thead><tbody>";

for (let r = 1; r <= lastRow; r++) {
  const kind = r === 1 ? "title-row" : r === 2 ? "freeze" : r % 6 === 5 ? "short" : "";
  html += `<tr class="${kind}"><th scope="row" class="${r === 1 ? "sel" : ""}">${r}</th>`;
  for (let c = 0; c < columns.length; c++) {
    const cell = (rows[r] || []).find(([name]) => name === columns[c][0]);
    if (!cell) { html += "<td></td>"; continue; }
    const span = cell[3] || 1;
    html += `<td class="${cell[2].trim()}"${span > 1 ? ` colspan="${span}"` : ""}>${markup(cell[1])}</td>`;
    c += span - 1;
  }
  html += "</tr>";
}
document.getElementById("grid").innerHTML = html + "</tbody>";
```
